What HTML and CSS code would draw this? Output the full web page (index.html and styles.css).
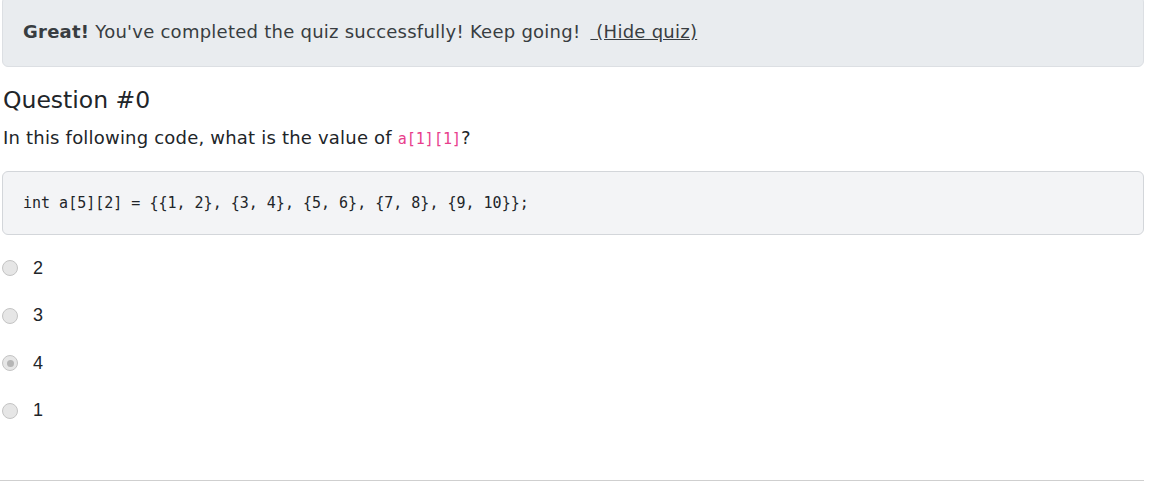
FILE: index.html
```html
<!DOCTYPE html>
<html lang="en">
<head>
<meta charset="utf-8">
<title>Quiz</title>
<link rel="stylesheet" href="styles.css">
</head>
<body>
<div class="page">
  <div class="alert"><strong>Great!</strong> You've completed the quiz successfully! Keep going! <a class="hide-link" href="#">&nbsp;(Hide quiz)</a></div>
  <div class="quiz">
    <h4 class="q-title">Question #0</h4>
    <p class="q-text">In this following code, what is the value of <code class="inline-code">a[1][1]</code>?</p>
    <pre class="code-block"><code>int a[5][2] = {{1, 2}, {3, 4}, {5, 6}, {7, 8}, {9, 10}};</code></pre>
    <ul class="options">
      <li class="option"><input type="radio" name="q0" disabled><span class="opt-label">2</span></li>
      <li class="option"><input type="radio" name="q0" disabled><span class="opt-label">3</span></li>
      <li class="option"><input type="radio" name="q0" disabled checked><span class="opt-label">4</span></li>
      <li class="option"><input type="radio" name="q0" disabled><span class="opt-label">1</span></li>
    </ul>
  </div>
  <hr class="divider">
</div>
</body>
</html>
```
FILE: styles.css
```css
html, body {
  margin: 0;
  padding: 0;
  background: #ffffff;
}

body {
  font-family: "DejaVu Sans", "Open Sans", sans-serif;
  color: #212529;
  overflow: hidden;
}

.page {
  width: 1144px;
}

.alert {
  margin: -4px 0 0 2px;
  padding: 21px 20px 20px 20px;
  line-height: 28px;
  font-size: 18px;
  letter-spacing: 0.25px;
  color: #383d41;
  background: #e9ecef;
  border: 1px solid #dcdfe3;
  border-radius: 6px;
}

.alert strong {
  font-weight: 700;
  color: #383d41;
}

.hide-link {
  color: #383d41;
  text-decoration: underline;
  margin-left: 4px;
}

.quiz {
  padding-left: 3px;
}

.q-title {
  margin: 17px 0 0 0;
  font-size: 23.5px;
  font-weight: 400;
  line-height: 32px;
  color: #212529;
}

.q-text {
  margin: 8px 0 0 0;
  font-size: 18px;
  letter-spacing: 0.2px;
  line-height: 28px;
  color: #212529;
}

.inline-code {
  font-family: "DejaVu Sans Mono", monospace;
  font-size: 15px;
  letter-spacing: 0;
  color: #e83e8c;
}

.code-block {
  margin: 18px 0 0 -1px;
  padding: 0 20px;
  height: 62px;
  display: flex;
  align-items: center;
  background: #f3f4f6;
  border: 1px solid #d3d6da;
  border-radius: 6px;
  font-family: "DejaVu Sans Mono", monospace;
  font-size: 15px;
  color: #212529;
}

.options {
  list-style: none;
  margin: 17px 0 0 -3px;
  padding: 0;
  display: flex;
  flex-direction: column;
  gap: 15.5px;
}

.option {
  display: flex;
  align-items: center;
  height: 32px;
  font-family: "Liberation Sans", Arial, sans-serif;
  font-size: 18px;
  color: #212529;
}

.option input {
  appearance: none;
  -webkit-appearance: none;
  flex: none;
  box-sizing: border-box;
  margin: 0 0 0 2px;
  width: 16px;
  height: 16px;
  border: 1px solid #c4c4c4;
  border-radius: 50%;
  background: #e6e6e6;
  display: grid;
  place-items: center;
}

.option input:checked::after {
  content: "";
  width: 7px;
  height: 7px;
  border-radius: 50%;
  background: #b5b5b5;
}

.opt-label {
  margin-left: 15px;
}

.divider {
  margin: 53px 0 0 0;
  border: 0;
  border-top: 1px solid #cfcfcf;
  height: 0;
}
```
